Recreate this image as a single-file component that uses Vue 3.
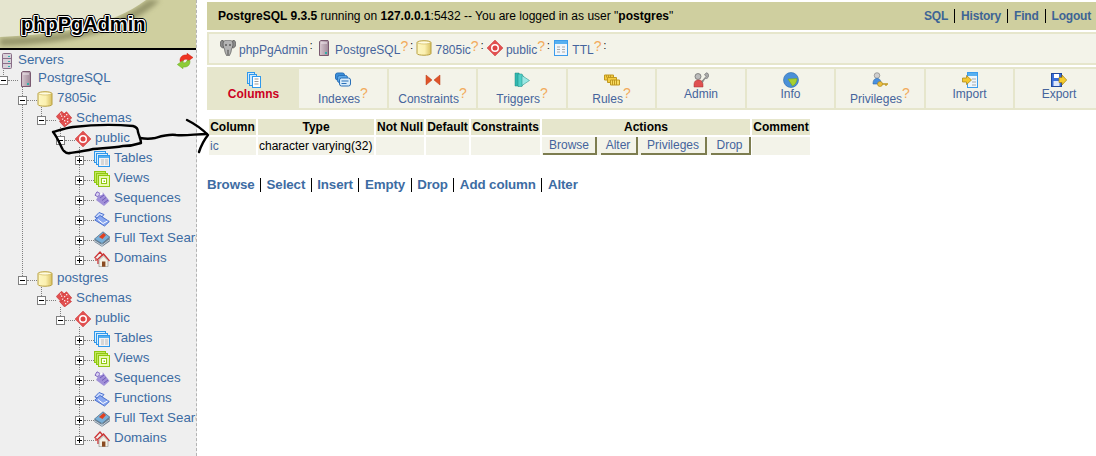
<script setup>
const tree = [
  { d: 0, icon: 'server', label: 'PostgreSQL', t: 'minus' },
  { d: 1, icon: 'db', label: '7805ic', t: 'minus' },
  { d: 2, icon: 'schemas', label: 'Schemas', t: 'minus' },
  { d: 3, icon: 'public', label: 'public', t: 'minus' },
  { d: 4, icon: 'tables', label: 'Tables', t: 'plus' },
  { d: 4, icon: 'views', label: 'Views', t: 'plus' },
  { d: 4, icon: 'sequences', label: 'Sequences', t: 'plus' },
  { d: 4, icon: 'functions', label: 'Functions', t: 'plus' },
  { d: 4, icon: 'fulltext', label: 'Full Text Search', t: 'plus' },
  { d: 4, icon: 'domains', label: 'Domains', t: 'plus' },
  { d: 1, icon: 'db', label: 'postgres', t: 'minus' },
  { d: 2, icon: 'schemas', label: 'Schemas', t: 'minus' },
  { d: 3, icon: 'public', label: 'public', t: 'minus' },
  { d: 4, icon: 'tables', label: 'Tables', t: 'plus' },
  { d: 4, icon: 'views', label: 'Views', t: 'plus' },
  { d: 4, icon: 'sequences', label: 'Sequences', t: 'plus' },
  { d: 4, icon: 'functions', label: 'Functions', t: 'plus' },
  { d: 4, icon: 'fulltext', label: 'Full Text Search', t: 'plus' },
  { d: 4, icon: 'domains', label: 'Domains', t: 'plus' }
]
const guides = [
  [3.5, 68, 77], [22.5, 87, 280], [41.5, 107, 116], [60.5, 127, 136], [79.5, 147, 258],
  [41.5, 287, 296], [60.5, 307, 316], [79.5, 327, 438]
]
const trail = [
  { icon: 'elephant', label: 'phpPgAdmin', help: false },
  { icon: 'server', label: 'PostgreSQL', help: true },
  { icon: 'db', label: '7805ic', help: true },
  { icon: 'public', label: 'public', help: true },
  { icon: 'tables1', label: 'TTL', help: true }
]
const tabs = [
  { icon: 'columns', label: 'Columns', active: true },
  { icon: 'indexes', label: 'Indexes', help: true },
  { icon: 'constraints', label: 'Constraints', help: true },
  { icon: 'triggers', label: 'Triggers', help: true },
  { icon: 'rules', label: 'Rules', help: true },
  { icon: 'admin', label: 'Admin' },
  { icon: 'info', label: 'Info' },
  { icon: 'privileges', label: 'Privileges', help: true },
  { icon: 'import', label: 'Import' },
  { icon: 'export', label: 'Export' }
]
const topLinks = ['SQL', 'History', 'Find', 'Logout']
const headers = ['Column', 'Type', 'Not Null', 'Default', 'Constraints', 'Actions', 'Comment']
const actions = ['Browse', 'Alter', 'Privileges', 'Drop']
const navLinks = ['Browse', 'Select', 'Insert', 'Empty', 'Drop', 'Add column', 'Alter']
const ref = (n) => '#i-' + n
</script>

<template>
  <div class="page">
    <svg class="defs" width="0" height="0" aria-hidden="true">
      <defs>
        <linearGradient id="g-cyl" x1="0" x2="1" y1="0" y2="0">
          <stop offset="0" stop-color="#fdf6c0" /><stop offset="0.55" stop-color="#fbf0b0" /><stop offset="1" stop-color="#d8c060" />
        </linearGradient>
        <linearGradient id="g-srv" x1="0" x2="1" y1="0" y2="0">
          <stop offset="0" stop-color="#d8c8d0" /><stop offset="1" stop-color="#a08898" />
        </linearGradient>
        <symbol id="i-server-stack" viewBox="0 0 16 16">
          <rect x="2.500" y="0.500" width="9" height="15" rx="1" fill="#d8d0d8" stroke="#8a6f88" />
          <path d="M3 5.500h8M3 10.500h8" stroke="#8a6f88" />
          <rect x="8" y="3" width="2" height="1" fill="#30b0b0" /><rect x="8" y="8" width="2" height="1" fill="#30b0b0" /><rect x="8" y="13" width="2" height="1" fill="#30b0b0" />
        </symbol>
        <symbol id="i-server" viewBox="0 0 16 16">
          <path d="M3.500 1.500 5 .5h7l.5 1V15.500h-9z" fill="url(#g-srv)" stroke="#7a5a70" />
          <path d="M5 3h6" stroke="#f0e8ee" />
          <rect x="9" y="12" width="2" height="2" fill="#30b0a8" />
        </symbol>
        <symbol id="i-db" viewBox="0 0 16 16">
          <path d="M1 2.500C1 .2 15 .2 15 2.500v11c0 2.300-14 2.300-14 0z" fill="url(#g-cyl)" stroke="#b8a040" />
          <ellipse cx="8" cy="2.500" rx="6.500" ry="1.500" fill="#fffbe0" stroke="#c8b050" stroke-width=".6" />
        </symbol>
        <symbol id="i-schemas" viewBox="0 0 16 16">
          <g fill="#e25050" stroke="#c83434" stroke-width=".7">
            <path d="M5.500.3 11 5.500 5.500 11 .3 5.500z" /><path d="M5 5.500 10.500.8 15.700 7 10 12z" /><path d="M7 10 10 6 15.500 10.500 8.500 15.900 3.500 10.500z" />
          </g>
          <g fill="#fff" opacity=".85">
            <rect x="5" y="4.500" width="1.300" height="1.300" /><rect x="8" y="5" width="1.300" height="1.300" /><rect x="10" y="3" width="1.300" height="1.300" /><rect x="11" y="7" width="1.300" height="1.300" /><rect x="8" y="9" width="1.300" height="1.300" /><rect x="6" y="7.500" width="1.300" height="1.300" /><rect x="4" y="2.500" width="1.200" height="1.200" /><rect x="9" y="12" width="1.300" height="1.300" /><rect x="11" y="10" width="1.300" height="1.300" />
          </g>
        </symbol>
        <symbol id="i-public" viewBox="0 0 16 16">
          <path d="M8 0 16 8 8 16 0 8z" fill="#e25050" stroke="#cc3a3a" stroke-width=".5" />
          <circle cx="8" cy="8" r="4" fill="#fff" />
          <circle cx="8" cy="8" r="2.500" fill="#dd4444" />
        </symbol>
        <symbol id="i-tables" viewBox="0 0 16 16">
          <rect x=".5" y=".5" width="11" height="11" fill="#d8eefc" stroke="#2f98ec" />
          <rect x="2.500" y="2.500" width="11" height="11" fill="#d8eefc" stroke="#2f98ec" />
          <rect x="4.500" y="4.500" width="11" height="11" fill="#f2f2f2" stroke="#2f98ec" />
          <rect x="5" y="5" width="10" height="2" fill="#58b0f0" />
          <path d="M7 9h3M11 9h3M7 11h3M11 11h3M7 13h3M11 13h3" stroke="#bbb" />
        </symbol>
        <symbol id="i-tables1" viewBox="0 0 16 16">
          <rect x="1.500" y=".5" width="13" height="15" fill="#f2f6fa" stroke="#3c9cec" />
          <rect x="2" y="1" width="12" height="3" fill="#58b0f0" />
          <path d="M4 7h3M9 7h3M4 9.500h3M9 9.500h3M4 12h3M9 12h3" stroke="#aaa" />
        </symbol>
        <symbol id="i-views" viewBox="0 0 16 16">
          <rect x=".5" y=".5" width="11" height="11" fill="#c4e860" stroke="#90c810" />
          <rect x="2.500" y="2.500" width="11" height="11" fill="#c4e860" stroke="#90c810" />
          <rect x="4.500" y="4.500" width="11" height="11" fill="#e8f8b0" stroke="#90c810" />
          <rect x="7.500" y="7.500" width="5" height="5" fill="#fff" stroke="#90c810" />
          <rect x="9.500" y="9.500" width="1.500" height="1.500" fill="#90c810" />
        </symbol>
        <symbol id="i-sequences" viewBox="0 0 16 16">
          <path d="M3 .8 6 2.500 4 6 1 4.200z" fill="#d8d0f0" stroke="#8068c0" />
          <path d="M5 4 9 1.500 15.500 10 10 15 2 9z" fill="#a090d8" />
          <path d="M6 7 10 4M8 9.500 12 6.500M10 12 14 9" stroke="#7058b8" />
          <path d="M5.500 3 8 1.500 9 3 6.500 4.500z" fill="#fff" />
        </symbol>
        <symbol id="i-functions" viewBox="0 0 16 16">
          <path d="M.8 6 5 1.500 10 3.500 6 8z" fill="#c8d8fc" stroke="#4a70d0" />
          <path d="M.8 9 6 4.500 15.300 10.500 10.500 15z" fill="#8aa8f0" stroke="#4a70d0" />
          <path d="M4 8.500 9 12.500 13.500 10" fill="none" stroke="#fff" />
        </symbol>
        <symbol id="i-fulltext" viewBox="0 0 16 16">
          <path d="M.5 8 9 .8 15.700 6v4.500L8 15.700.5 11z" fill="#708090" />
          <path d="M.5 8 9 .8 15.700 6 8 12.500z" fill="#7ab0d8" stroke="#50708a" stroke-width=".6" />
          <path d="M8 12.500v3M1 10 8 14.500 15 9" stroke="#c0d0dc" fill="none" />
          <path d="M5 6 9.500 2 12 4 8.500 8z" fill="#e04020" />
        </symbol>
        <symbol id="i-domains" viewBox="0 0 16 16">
          <path d="M.5 7 6 1 9 4.500M2 10V7M4 13V9" fill="none" stroke="#cc3333" stroke-width="1.300" />
          <path d="M3 9 9.500 3 15.500 10" fill="none" stroke="#cc3333" stroke-width="1.500" />
          <path d="M5 9.200 9.500 5 14 9.500v6.200H5z" fill="#f4f0e4" stroke="#888" stroke-width=".6" />
          <rect x="8" y="10.500" width="3.400" height="5.200" fill="#8a4a20" />
        </symbol>
        <symbol id="i-plus" viewBox="0 0 9 9">
          <rect x=".5" y=".5" width="8" height="8" fill="#fff" stroke="#808080" />
          <path d="M2 4.500h5M4.500 2v5" stroke="#000" />
        </symbol>
        <symbol id="i-minus" viewBox="0 0 9 9">
          <rect x=".5" y=".5" width="8" height="8" fill="#fff" stroke="#808080" />
          <path d="M2 4.500h5" stroke="#000" />
        </symbol>
        <symbol id="i-refresh" viewBox="0 0 16 16">
          <path d="M3 7.500C3 3.500 6 1.500 10 2V.3L16 4.500 10.500 8.500V6.300C8 6 6.500 6.500 6 8.500H3z" fill="#ee3322" stroke="#c82010" stroke-width=".5" />
          <path d="M13 8.500C13 12.500 10 14.500 6 14V15.700L.3 11.500 6 7.500V9.700C8 10 9.500 9.500 10 7.500H13z" fill="#8ccc38" stroke="#68a822" stroke-width=".5" />
        </symbol>
        <symbol id="i-elephant" viewBox="0 0 16 16">
          <path d="M3 0C1 0 0 2 .3 5 .6 7 2 8 3.500 8 3.800 6 4 3 3 0zM13 0c2 0 3 2 2.700 5C15.400 7 14 8 12.500 8 12.200 6 12 3 13 0z" fill="#8c8c8c" stroke="#444" stroke-width=".6" />
          <path d="M3.500 1.500C6-.5 10-.5 12.500 1.500c.8 2.500.5 5.500-1 7.500l-.5 3L9.500 15.500H8.300V10H7.700v5.500H6.500L5 12 4.500 9C3 7 2.700 4 3.500 1.500z" fill="#b4b4b4" stroke="#444" stroke-width=".6" />
          <circle cx="6" cy="5" r=".8" fill="#222" /><circle cx="10" cy="5" r=".8" fill="#222" />
        </symbol>
        <symbol id="i-columns" viewBox="0 0 16 16">
          <rect x="1.500" y=".5" width="7" height="11" fill="#cfe8fb" stroke="#2f98ec" />
          <rect x="3.500" y="2.500" width="7" height="11" fill="#cfe8fb" stroke="#2f98ec" />
          <rect x="6.500" y="4.500" width="8" height="11" fill="#fff" stroke="#2f98ec" />
          <path d="M8.500 7h4M8.500 9.500h4M8.500 12h4" stroke="#999" />
        </symbol>
        <symbol id="i-indexes" viewBox="0 0 16 16">
          <rect x=".5" y="1" width="9" height="7" rx="2" fill="#3a8fd8" stroke="#2a70b8" />
          <rect x="2.500" y="3.500" width="10" height="7" rx="2" fill="#5aa8e8" stroke="#2a70b8" />
          <rect x="4.500" y="6" width="11" height="8" rx="2" fill="#d8ecfa" stroke="#2a70b8" />
          <path d="M6.500 9h7M6.500 11.500h5" stroke="#2a70b8" />
        </symbol>
        <symbol id="i-constraints" viewBox="0 0 16 16">
          <path d="M1 3 7 8 1 13z" fill="#e0542a" stroke="#b83c1a" stroke-width=".5" />
          <path d="M15 3 9 8 15 13z" fill="#e0542a" stroke="#b83c1a" stroke-width=".5" />
        </symbol>
        <symbol id="i-triggers" viewBox="0 0 16 16">
          <path d="M1 1h4l2 6-2 7H1z" fill="#30b8b0" stroke="#1c8880" stroke-width=".5" />
          <path d="M4 2h4l3 5.500-3 7H4z" fill="#50d0c8" stroke="#1c8880" stroke-width=".5" />
          <path d="M8 3.500l7.500 5-7.500 5z" fill="#9ae8e4" stroke="#1c8880" stroke-width=".5" />
        </symbol>
        <symbol id="i-rules" viewBox="0 0 16 16">
          <path d="M.5 3h9v5h-9z" fill="#f4cc40" stroke="#c09820" />
          <path d="M3.500 5.500h9v5h-9z" fill="#f4cc40" stroke="#c09820" />
          <path d="M6.500 8h9v5h-9z" fill="#f8dc60" stroke="#c09820" />
          <path d="M8.500 8v5M10.500 8v5M12.500 8v5M2.500 3v2.500M4.500 3v2.500M6.500 3v2.500" stroke="#c09820" />
        </symbol>
        <symbol id="i-admin" viewBox="0 0 16 16">
          <circle cx="5" cy="4.500" r="3" fill="#bbb" stroke="#666" stroke-width=".7" />
          <path d="M1 13c0-4 2-5 4.500-5S10 9 10 13v2H1z" fill="#e05050" stroke="#a03030" stroke-width=".5" />
          <path d="M9 9 13 4.500 11.500 2.500 13.500.8C15.500 1 16.300 3.500 15 5.500 14 7 12.500 6.500 12 6.500L9.500 10.500z" fill="#aaa" stroke="#666" stroke-width=".6" />
        </symbol>
        <symbol id="i-info" viewBox="0 0 16 16">
          <circle cx="8" cy="8" r="7.500" fill="#4a90d8" stroke="#2a68a8" stroke-width=".6" />
          <path d="M5 7 14 6.500C14 10 12 13 9.500 14z" fill="#a8d030" stroke="#78a010" stroke-width=".5" />
        </symbol>
        <symbol id="i-privileges" viewBox="0 0 16 16">
          <circle cx="5" cy="3.500" r="2.800" fill="#cfcfcf" stroke="#777" stroke-width=".6" />
          <path d="M1 12c0-4 1.500-5.500 4-5.500s4 1.500 4 5.500z" fill="#4a90e0" stroke="#2a68a8" stroke-width=".6" />
          <circle cx="8" cy="12" r="2.500" fill="#eec040" stroke="#a08020" stroke-width=".6" />
          <path d="M10 12h6M14 12v2" stroke="#c09820" stroke-width="1.300" />
        </symbol>
        <symbol id="i-import" viewBox="0 0 16 16">
          <rect x="5.500" y=".5" width="10" height="15" fill="#eef6fc" stroke="#3c9cec" />
          <rect x="6" y="1" width="9" height="3" fill="#58b0f0" />
          <path d="M10 7h4M10 10h4M10 13h4" stroke="#aaa" />
          <path d="M.5 6h4V3.500L9.500 8 4.500 12.500V10h-4z" fill="#f4c830" stroke="#a88010" stroke-width=".7" />
        </symbol>
        <symbol id="i-export" viewBox="0 0 16 16">
          <rect x=".5" y="1.500" width="10" height="13" fill="#3a6ed8" stroke="#20489c" />
          <rect x="3" y="2" width="5" height="4" fill="#fff" />
          <rect x="2.500" y="9" width="6" height="5" fill="#dfe8fa" />
          <path d="M8 5.500h3V3l4.700 5-4.700 5v-2.500H8z" fill="#f4cc30" stroke="#a88010" stroke-width=".7" />
        </symbol>
        <filter id="soft" x="-10%" y="-40%" width="120%" height="180%">
          <feGaussianBlur stdDeviation="2.500" />
        </filter>
      </defs>
    </svg>

    <aside class="side">
      <header class="logo">
        <svg class="logo-art" width="197" height="48" viewBox="0 0 197 48" aria-hidden="true">
          <rect width="197" height="48" fill="#cfcf9f" />
          <path d="M0 38C70 36 115 26 148 0H160C130 30 70 44 0 46z" fill="#77774f" filter="url(#soft)" opacity=".65" />
          <path d="M0 0H146C112 25 66 34 0 37z" fill="#e5e5cf" />
        </svg>
        <span class="logo-text">phpPgAdmin</span>
      </header>
      <div class="tree">
        <svg class="guides" width="197" height="404" viewBox="0 50 197 404" aria-hidden="true">
          <line v-for="(g, i) in guides" :key="i" :x1="g[0]" :x2="g[0]" :y1="g[1]" :y2="g[2]" stroke="#808080" stroke-dasharray="1 1" />
        </svg>
        <div class="row root-row">
          <svg class="icon root-icon" width="16" height="16"><use :href="ref('server-stack')" /></svg>
          <span class="node-label">Servers</span>
          <svg class="icon root-icon refresh" width="16" height="16"><use :href="ref('refresh')" /></svg>
        </div>
        <div v-for="(n, i) in tree" :key="i" class="row" :class="'depth-' + n.d">
          <svg class="toggle" width="9" height="9"><use :href="ref(n.t)" /></svg>
          <span class="dots"></span>
          <svg class="icon" width="16" height="16"><use :href="ref(n.icon)" /></svg>
          <span class="node-label">{{ n.label }}</span>
        </div>
      </div>
    </aside>

    <main class="main">
      <div class="topbar">
        <div class="server-info">
          <b>PostgreSQL 9.3.5</b> running on <b>127.0.0.1</b>:5432 -- You are logged in as user "<b>postgres</b>"
        </div>
        <nav class="top-links">
          <a v-for="l in topLinks" :key="l" class="link">{{ l }}</a>
        </nav>
      </div>

      <div class="trail">
        <span v-for="t in trail" :key="t.label" class="crumb">
          <svg class="icon" width="16" height="16"><use :href="ref(t.icon)" /></svg>
          <a class="crumb-label">{{ t.label }}</a><span v-if="t.help" class="help">?</span><span class="colon">:</span>
        </span>
      </div>

      <div class="tabs">
        <div v-for="t in tabs" :key="t.label" class="tab" :class="{ active: t.active, 'has-help': t.help }">
          <svg class="icon" width="16" height="16"><use :href="ref(t.icon)" /></svg>
          <span class="tab-label">{{ t.label }}<span v-if="t.help" class="help">?</span></span>
        </div>
      </div>

      <table class="data">
        <colgroup>
          <col class="c1" /><col class="c2" /><col class="c3" /><col class="c4" /><col class="c5" /><col class="c6" /><col class="c7" />
        </colgroup>
        <thead>
          <tr><th v-for="h in headers" :key="h">{{ h }}</th></tr>
        </thead>
        <tbody>
          <tr>
            <td><a class="cell-link">ic</a></td>
            <td class="nowrap">character varying(32)</td>
            <td></td>
            <td></td>
            <td></td>
            <td class="actions-cell">
              <div class="actions">
                <a v-for="a in actions" :key="a" class="action">{{ a }}</a>
              </div>
            </td>
            <td></td>
          </tr>
        </tbody>
      </table>

      <nav class="navlinks">
        <a v-for="l in navLinks" :key="l" class="nav-link">{{ l }}</a>
      </nav>
    </main>

    <svg class="scribble" width="1096" height="456" viewBox="0 0 1096 456" aria-hidden="true">
      <g fill="none" stroke="#000" stroke-width="2.400" stroke-linecap="round" stroke-linejoin="round">
        <path d="M53 132C60 130 66 128 73 127C90 125 112 124 133 126C137 127 138 129 138 132C139 136 141 139 141 143C135 145 130 146 123 146C112 148 103 148 93 149C85 151 77 152 70 153C66 154 65 152 63 150C60 145 58 138 53 132" />
        <path d="M140 138C146 139 150 139 155 138C162 136 168 134 176 135C186 136 196 134 207 134" />
        <path d="M187 120C193 123 202 129 208 135C204 140 201 146 199 152" />
      </g>
    </svg>
  </div>
</template>

<style>
html, body { margin: 0; background: #fff; overflow: hidden; }
</style>

<style scoped>
.page {
  position: relative;
  display: flex;
  width: 1096px;
  height: 456px;
  overflow: hidden;
  font-family: "Liberation Sans", Arial, sans-serif;
  font-size: 12px;
  color: #000;
  background: #fff;
}
.defs { position: absolute; }
.icon { flex: none; display: block; }

/* Sidebar */
.side {
  flex: none;
  width: 196px;
  height: 456px;
  overflow: hidden;
  background: #efefef;
  border-right: 1px dashed #b4b4b4;
}
.logo {
  position: relative;
  height: 48px;
  border-bottom: 2px solid #000;
}
.logo-art { display: block; }
.logo-text {
  position: absolute;
  left: 21px;
  top: 13px;
  font-size: 20px;
  line-height: 23px;
  font-weight: 700;
  color: #000;
  text-shadow:
    1px 0 0 #fff, -1px 0 0 #fff, 0 1px 0 #fff, 0 -1px 0 #fff,
    1px 1px 0 #fff, -1px 1px 0 #fff, 1px -1px 0 #fff, -1px -1px 0 #fff,
    2px 0 0 #000, -2px 0 0 #000, 0 2px 0 #000, 0 -2px 0 #000,
    2px 1px 0 #000, -2px 1px 0 #000, 2px -1px 0 #000, -2px -1px 0 #000,
    1px 2px 0 #000, -1px 2px 0 #000, 1px -2px 0 #000, -1px -2px 0 #000;
}
.tree { position: relative; }
.guides {
  position: absolute;
  left: 0;
  top: 0;
}
.row {
  position: relative;
  display: flex;
  align-items: center;
  height: 20px;
  white-space: nowrap;
}
.root-row { height: 19px; }
.root-row .node-label { margin-left: 2px; margin-top: -1px; }
.root-icon { margin-top: 3px; }
.refresh { margin-left: auto; margin-right: 3px; }
.depth-0 { margin-left: -1px; }
.depth-1 { padding-left: 18px; }
.depth-2 { padding-left: 37px; }
.depth-3 { padding-left: 56px; }
.depth-4 { padding-left: 75px; }
.toggle { flex: none; display: block; margin-top: 3px; }
.dots {
  flex: none;
  width: 10px;
  margin-top: 3px;
  border-top: 1px dotted #808080;
}
.node-label {
  margin-left: 4px;
  margin-top: -4px;
  font-size: 13.33px;
  color: #3d6ca3;
}

/* Main column */
.main {
  flex: 1;
  min-width: 0;
  padding: 2px 0 0 10px;
  overflow: hidden;
}
.topbar {
  display: flex;
  align-items: center;
  justify-content: space-between;
  height: 28px;
  padding: 0 5px 0 11px;
  background: #cfcf9f;
}
.server-info { white-space: nowrap; }
.top-links { display: flex; }
.link {
  font-weight: 700;
  letter-spacing: -0.2px;
  color: #3d6495;
  padding: 0 6px;
  line-height: 14px;
  border-left: 1px solid #000;
}
.link:first-child { border-left: 0; }
.link:last-child { padding-right: 0; }

.trail {
  display: flex;
  align-items: center;
  width: 905px;
  height: 29px;
  margin-top: 2px;
  padding-left: 11px;
  background: #f3f3e9;
  border: 2px solid #e6e6cc;
  color: #3d6495;
}
.crumb {
  display: flex;
  align-items: center;
  margin-right: 3.500px;
  white-space: nowrap;
}
.crumb .icon { margin-top: -1px; }
.crumb-label { margin-left: 3px; margin-top: 3px; color: #45649c; }
.help {
  color: #f2ab5c;
  font-size: 14px;
  line-height: 12px;
  position: relative;
  top: -5px;
}
.crumb .help { top: -3px; }
.colon {
  color: #000;
  font-size: 10px;
  line-height: 10px;
  margin-left: 2px;
  margin-top: -6px;
}

.tabs {
  display: grid;
  grid-template-columns: repeat(10, 87.500px);
  gap: 2px;
  width: 909px;
  margin-top: 2px;
  padding: 2px 2px 2px 2.750px;
  background: #e6e6cc;
}
.tab {
  display: flex;
  flex-direction: column;
  align-items: center;
  height: 39px;
  padding-top: 3px;
  box-sizing: border-box;
  background: #f3f3e9;
  color: #45649c;
}
.tab-label { margin-top: -1px; line-height: 14px; white-space: nowrap; }
.tab.has-help .tab-label { margin-top: 4px; }
.tab.active { background: #e6e6cc; }
.tab.active .tab-label { font-weight: 700; color: #cc0022; }

.data {
  table-layout: fixed;
  border-collapse: separate;
  border-spacing: 2px;
  width: 605px;
  margin-top: 7px;
}
.c1 { width: 47px; }
.c2 { width: 116px; }
.c3 { width: 48px; }
.c4 { width: 43px; }
.c5 { width: 69px; }
.c6 { width: 208px; }
.c7 { width: 58px; }
.data th {
  height: 16px;
  padding: 0 1px;
  background: #e6e6cc;
  font-weight: 700;
  line-height: 14px;
  white-space: nowrap;
}
.data td {
  height: 18px;
  padding: 0 1px;
  background: #f3f3e9;
  line-height: 14px;
}
.nowrap { white-space: nowrap; }
.cell-link { color: #45649c; }
.data td.actions-cell { padding: 0; }
.actions {
  display: grid;
  grid-template-columns: 54px 37px 66px 40px;
  column-gap: 3.500px;
  padding-left: 1px;
}
.action {
  display: block;
  height: 18px;
  line-height: 17px;
  text-align: center;
  box-sizing: border-box;
  color: #45649c;
  background: #f3f3e9;
  border-right: 2px solid #7d7d50;
  border-bottom: 2px solid #7d7d50;
}

.navlinks {
  display: flex;
  margin-top: 21px;
}
.nav-link {
  font-size: 13.33px;
  line-height: 14px;
  font-weight: 700;
  letter-spacing: -0.1px;
  color: #3d6ca3;
  padding: 0 5.500px;
  border-left: 1px solid #000;
  white-space: nowrap;
}
.nav-link:first-child { padding-left: 0; border-left: 0; }

.scribble {
  position: absolute;
  left: 0;
  top: 0;
  pointer-events: none;
}
</style>
